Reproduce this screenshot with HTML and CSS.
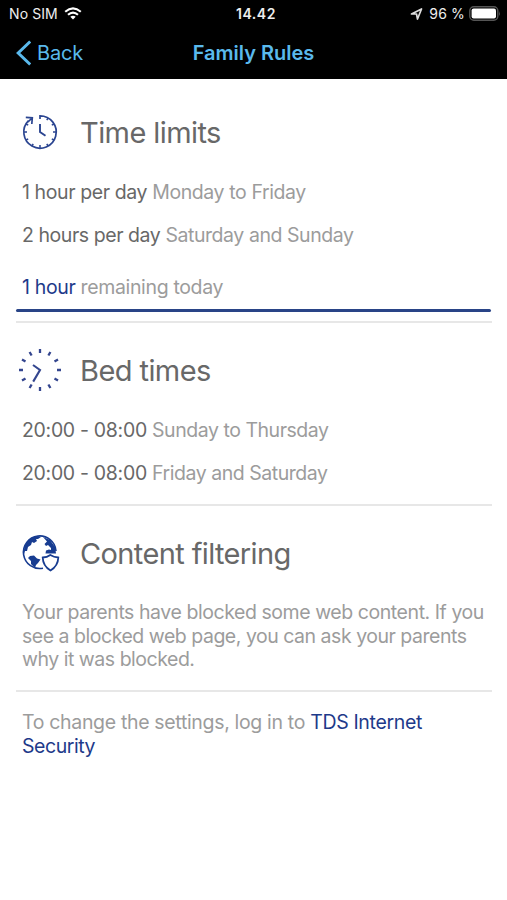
FILE: index.html
```html
<!DOCTYPE html>
<html lang="en">
<head>
<meta charset="utf-8">
<title>Family Rules</title>
<link rel="stylesheet" href="styles.css">
</head>
<body>
<header class="top">
  <div class="status">
    <div class="carrier"><span class="sim">No SIM</span>
      <svg class="wifi" width="18" height="13" viewBox="0 0 18 13" fill="none" stroke="#fff" stroke-width="2.1"><path d="M1.2 4.8Q9-2 16.8 4.8M4 7.8Q9 3.4 14 7.8"/><path d="M6.3 9.8Q9 7.6 11.7 9.8L9 12.5Z" fill="#fff" stroke="none"/></svg>
    </div>
    <div class="time">14.42</div>
    <div class="power">
      <svg width="13" height="12" viewBox="0 0 13 12" fill="none" stroke="#ddd" stroke-width="1.7" stroke-linejoin="round"><path d="M1.5 6 11.5 1 7.5 11 6.5 6Z"/></svg>
      <span class="percent">96 %</span>
      <svg class="battery" width="32" height="15" viewBox="0 0 32 15"><rect x=".8" y=".8" width="28" height="13.4" rx="4" fill="none" stroke="#555" stroke-width="1.4"/><rect x="2.6" y="2.6" width="24.4" height="9.8" rx="2" fill="#fff"/><path d="M30 5q1.6 2.5 0 5Z" fill="#555"/></svg>
    </div>
  </div>
  <nav class="nav">
    <a class="back"><svg width="16" height="27" viewBox="0 0 16 27" fill="none" stroke="#5ab9ec" stroke-width="3"><path d="M15.2 1.5 3.2 13 15.2 24.5"/></svg><span>Back</span></a>
    <h1>Family Rules</h1>
    <span></span>
  </nav>
</header>
<main>
  <section class="limits">
    <div class="head">
      <svg class="icon" width="44" height="44" viewBox="-22 -22 44 44" fill="none" stroke="#2b4591" stroke-width="1.7">
        <path d="M0-13V-16.2A16.2 16.2 0 1 1-11.5-11.4M-14.2-14.7-7.7-14.2-8.2-8M-8-14-12-10"/>
        <path d="M0-8V0L5.5 3.8" stroke-width="1.9"/>
        <path d="M8-13.9 6.8-11.8M13.9-8 11.8-6.8M16-0H13M13.9 8 11.8 6.8M8 13.9 6.8 11.8M0 16V13M-8 13.9-6.8 11.8M-13.9 8-11.8 6.8M-16 0H-13M-13.9-8-11.8-6.8" stroke-width="1.5"/>
      </svg>
      <h2>Time limits</h2>
    </div>
    <p class="row"><b>1 hour per day</b> <span>Monday to Friday</span></p>
    <p class="row weekend"><b>2 hours per day</b> <span>Saturday and Sunday</span></p>
    <p class="row remain"><b class="blue">1 hour</b> <span>remaining today</span></p>
    <div class="bar"></div>
  </section>
  <section class="bed">
    <div class="head">
      <svg class="icon" width="44" height="44" viewBox="-22 -22 44 44" fill="none" stroke="#34468f" stroke-width="2.3">
        <path d="M0-21V-17M0 17V21M-21 0H-17M17 0H21M10.4-18 8.4-14.5M18-10.4 14.5-8.4M18 10.4 14.5 8.4M10.4 18 8.4 14.5M-10.4 18-8.4 14.5M-18 10.4-14.5 8.4M-18-10.4-14.5-8.4M-10.4-18-8.4-14.5"/>
        <path d="M-7-5 0 0-6.8 11.6" stroke-width="2.1"/>
      </svg>
      <h2>Bed times</h2>
    </div>
    <p class="row"><b>20:00 - 08:00</b> <span>Sunday to Thursday</span></p>
    <p class="row"><b>20:00 - 08:00</b> <span>Friday and Saturday</span></p>
  </section>
  <section class="content">
    <div class="head">
      <svg class="icon" width="44" height="44" viewBox="0 0 44 44" fill="none" stroke="#173c91" stroke-width="1.6">
        <path d="M38 20A16.3 16.3 0 1 0 25 37.2"/>
        <g fill="#173c91" stroke="none">
          <path d="M6 23C5 13 11 6 20 5L23 6 20 8 18 8 19 10 16 12 14 11 13 14 10 16 9 20 7 20Z"/>
          <path d="M12 25 16 24.5 19 27.5 22.5 28.5 20 32 18 34 17 37 13 33 13 30 10 27Z"/>
          <path d="M25 6 32 9 37 16 38 22.5 27.5 22.5 28 19.5 31 18.5 33 19 33 17 30 14 28 15 26.5 13 29 10.5Z"/>
        </g>
        <path d="M32.3 24Q29 26.3 24.7 26.5 25 35 32.5 39.5 40 35 40.3 26.5 36 26.3 32.3 24Z" fill="#fff" stroke-width="1.8"/>
      </svg>
      <h2 class="h-content">Content filtering</h2>
    </div>
    <p class="para">Your parents have blocked some web content. If you<br><span class="tight">see a blocked web page, you can ask your parents</span><br><span class="tight">why it was blocked.</span></p>
  </section>
  <section class="settings">
    <p class="para"><span class="wide">To change the settings, log in to</span> <a class="blue product">TDS Internet</a><br><a class="blue">Security</a></p>
  </section>
</main>
</body>
</html>
```
FILE: styles.css
```css
* { box-sizing: border-box; }
body { margin: 0; background: #fff; color: #9c9c9c; font-family: Inter, "Liberation Sans", sans-serif; }
h1, h2, p { margin: 0; font-weight: 400; }
svg { display: block; flex: none; }
.top { height: 79px; background: #000; }
.status { height: 27px; display: grid; grid-template-columns: 1fr auto 1fr; align-items: center; padding: 0 6px 0 9px; color: #eee; font-size: 14px; line-height: 27px; }
.carrier, .power { display: flex; align-items: center; }
.carrier { gap: 6px; letter-spacing: .1px; }
.power { justify-content: flex-end; gap: 6px; letter-spacing: .15px; }
.battery { margin-left: -2px; }
.time { font-weight: 600; letter-spacing: .5px; padding-left: 2px; }
.nav { height: 52px; display: grid; grid-template-columns: 1fr auto 1fr; align-items: center; padding: 0 15px; color: #5ab9ec; font-size: 20px; }
.back { display: flex; align-items: center; gap: 6px; letter-spacing: -.2px; }
.nav h1 { font-size: 20px; font-weight: 600; letter-spacing: 0; }
main { padding: 0 15px 0 16px; }
section { border-bottom: 2px solid #e7e7e7; }
.limits { height: 244px; padding-top: 31px; }
.bed { height: 183px; padding-top: 25px; }
.content { height: 186px; padding-top: 25px; }
.settings { border: 0; padding-top: 19px; }
.head { height: 44px; display: flex; align-items: center; gap: 18px; padding-left: 2px; }
h2 { color: #686868; font-size: 29px; line-height: 46px; letter-spacing: -.58px; padding-top: 1px; }
.h-content { letter-spacing: -.62px; }
.row { height: 43px; line-height: 43px; padding-left: 6px; font-size: 19.5px; letter-spacing: -.4px; white-space: nowrap; }
.head + .row { margin-top: 17px; }
.row b { color: #686868; font-weight: 400; }
.weekend { letter-spacing: -.44px; }
.bed b { letter-spacing: -.31px; }
.bed span { letter-spacing: -.46px; }
.row .blue, .blue { color: #1e3a8a; }
.remain { margin-top: 9px; letter-spacing: -.35px; }
.bar { height: 3px; width: 475px; background: #294487; border-radius: 2px; }
.para { padding-left: 6px; font-size: 19.5px; line-height: 23.5px; letter-spacing: -.44px; white-space: nowrap; }
.tight { letter-spacing: -.48px; }
.wide { letter-spacing: -.33px; }
.product { letter-spacing: -.33px; }
.content .para { margin-top: 26px; }
```
